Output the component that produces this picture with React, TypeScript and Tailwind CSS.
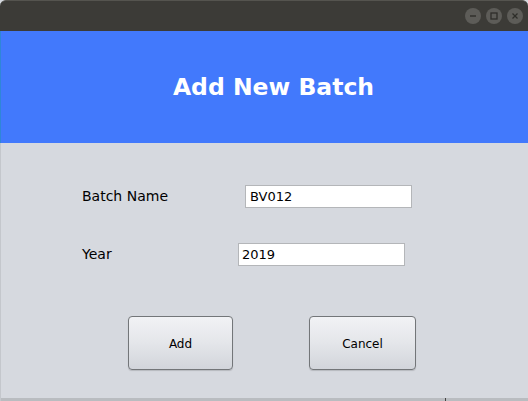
import React from "react";

const font = { fontFamily: '"DejaVu Sans", "Liberation Sans", sans-serif' };

function Ctl({ kind }: { kind: "min" | "max" | "close" }) {
  return (
    <div className="w-4 h-4 rounded-full bg-[#5d5c58] flex items-center justify-center">
      <svg width="10" height="10" viewBox="0 0 10 10">
        {kind === "min" && <line x1="2" y1="5" x2="8" y2="5" stroke="#2e2d2a" strokeWidth="1.4" />}
        {kind === "max" && <rect x="2" y="2" width="6" height="6" fill="none" stroke="#2e2d2a" strokeWidth="1.3" />}
        {kind === "close" && (
          <g stroke="#2e2d2a" strokeWidth="1.3">
            <line x1="2.5" y1="2.5" x2="7.5" y2="7.5" />
            <line x1="7.5" y1="2.5" x2="2.5" y2="7.5" />
          </g>
        )}
      </svg>
    </div>
  );
}

export default function App() {
  return (
    <div className="w-[528px] h-[401px] flex flex-col bg-[#d6d9df] overflow-hidden" style={font}>
      <div className="h-[31px] shrink-0 bg-[#3c3b37] rounded-t-[6px] border-t border-[#55544f] flex items-center justify-end pr-[5px] gap-[5px]">
        <Ctl kind="min" />
        <Ctl kind="max" />
        <Ctl kind="close" />
      </div>
      <div className="h-[112px] shrink-0 bg-[#4279fc] border-l border-[#2f86d8] flex items-center justify-center">
        <span className="text-white font-bold text-[23.5px] ml-[18px] mt-[2px]">Add New Batch</span>
      </div>
      <div className="flex-1 flex flex-col border-l border-[#c4c7cc]">
        <div className="flex items-center pt-[42px] pl-[81px]">
          <span className="w-[163px] text-[14px] text-black">Batch Name</span>
          <div className="w-[167px] h-[23px] bg-white border border-[#b4b6b9] flex items-center pl-[4px] text-[13px] text-black">BV012</div>
        </div>
        <div className="flex items-center mt-[35px] pl-[81px]">
          <span className="w-[156px] text-[14px] text-black">Year</span>
          <div className="w-[167px] h-[23px] bg-white border border-[#b4b6b9] flex items-center pl-[3px] text-[13px] text-black">2019</div>
        </div>
        <div className="flex mt-[50px] pl-[127px] gap-[76px]">
          <div className="w-[105px] h-[54px] pt-[2px] rounded-[4px] border border-[#737679] bg-gradient-to-b from-[#f1f2f5] via-[#e4e6ea] to-[#d2d5db] shadow-[0_1px_1px_rgba(0,0,0,0.15)] flex items-center justify-center text-[12px] text-black">Add</div>
          <div className="w-[107px] h-[54px] pt-[2px] rounded-[4px] border border-[#737679] bg-gradient-to-b from-[#f1f2f5] via-[#e4e6ea] to-[#d2d5db] shadow-[0_1px_1px_rgba(0,0,0,0.15)] flex items-center justify-center text-[12px] text-black">Cancel</div>
        </div>
        <div className="flex-1" />
        <div className="h-[3px] bg-[#b9bcc0] flex">
          <div className="ml-[444px] w-px bg-[#444]" />
        </div>
      </div>
    </div>
  );
}
